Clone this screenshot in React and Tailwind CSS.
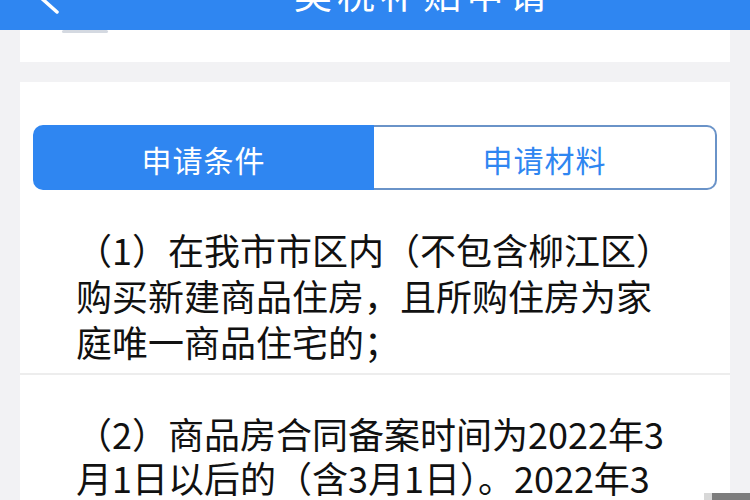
export default function App() {
  const lineCls = "whitespace-nowrap";
  return (
    <div className="relative w-[750px] h-[500px] overflow-hidden bg-[#f2f2f4] font-['Noto_Sans_CJK_SC','Noto_Sans',sans-serif] text-[#111111]">
      {/* header */}
      <div className="flex items-start h-[30px] overflow-hidden bg-[#2f86f1]">
        <svg width="70" height="30" viewBox="0 0 70 30" className="shrink-0">
          <path d="M57 -20 L39 -4 L57 12" fill="none" stroke="#ffffff" strokeWidth="3.5" strokeLinecap="round" strokeLinejoin="round" />
        </svg>
        <div className="ml-[224px] -mt-[27px] text-[38px] leading-[38px] tracking-[5px] text-white whitespace-nowrap">
          契税补贴申请
        </div>
      </div>

      <div className="px-[20px]">
        {/* top white strip */}
        <div className="h-[32px] bg-white">
          <div className="ml-[42px] w-[46px] h-[3px] rounded-full bg-[#c9d0da] opacity-80" />
        </div>
        <div className="h-[20px]" />
        {/* main card */}
        <div className="bg-white h-[420px] flex flex-col">
          <div className="shrink-0 mx-[13px] mt-[43px] h-[65px] flex">
            <div className="flex-1 flex items-center justify-center rounded-l-[10px] bg-[#2f86f1] text-white text-[30px] tracking-[1px] pt-[4px]">
              申请条件
            </div>
            <div className="flex-1 flex items-center justify-center rounded-r-[10px] border-2 border-l-0 border-[#6a93c8] bg-white text-[#2f86f1] text-[30px] tracking-[1px] pt-[4px]">
              申请材料
            </div>
          </div>

          <div className="shrink-0 pl-[56px] mt-[36px] text-[36px] leading-[46px]">
            <div className={lineCls}>（1）在我市市区内（不包含柳江区）</div>
            <div className={lineCls}>购买新建商品住房，且所购住房为家</div>
            <div className={lineCls}>庭唯一商品住宅的；</div>
          </div>

          <div className="shrink-0 mt-[9px] h-[2px] bg-[#ededed]" />

          <div className="shrink-0 pl-[56px] mt-[36px] text-[36px] leading-[44px]">
            <div className={lineCls}>（2）商品房合同备案时间为2022年3</div>
            <div className={lineCls}>月1日以后的（含3月1日）。2022年3</div>
            <div className={lineCls}>月1日前已办理商品房合同备案的商品</div>
          </div>
        </div>
      </div>

      {/* watermark corner */}
      <div className="absolute right-0 bottom-0 flex h-[7px]">
        <div className="w-[8px] bg-[#d8d8d8]" />
        <div className="w-[38px] bg-[#7d7d7d]" />
      </div>
    </div>
  );
}
